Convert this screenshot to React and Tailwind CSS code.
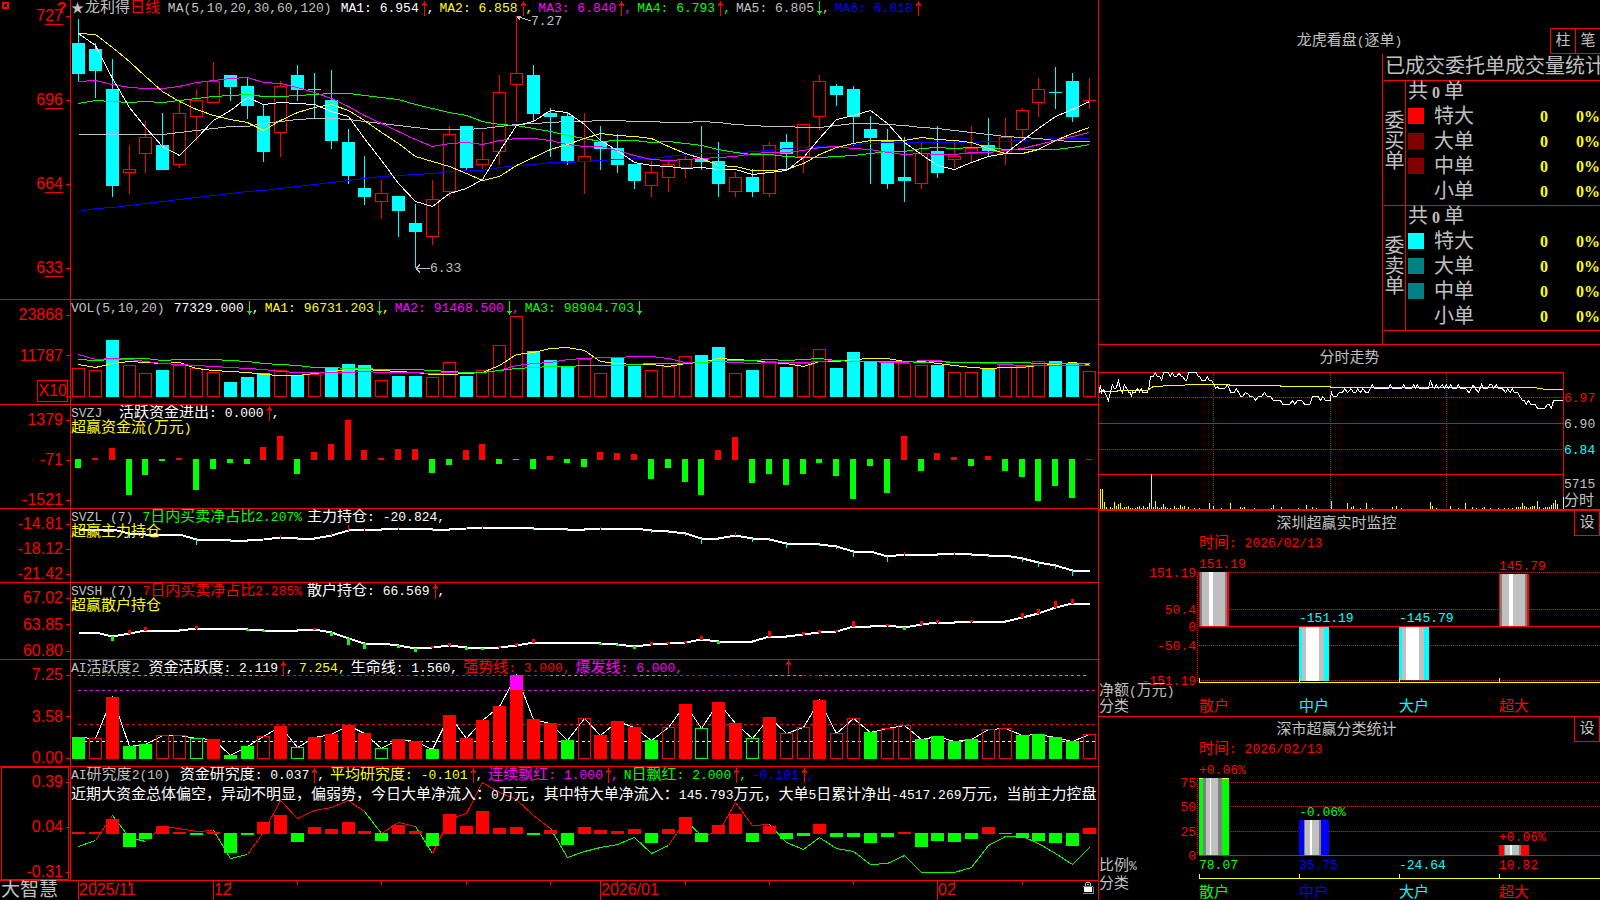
import React from 'react';

const RED = '#ff0000';
const GREEN = '#00ff00';
const CYAN = '#00ffff';
const YELLOW = '#ffff00';
const MAGENTA = '#ff00ff';
const BLUE = '#0000ff';
const SILVER = '#c0c0c0';
const WHITE = '#ffffff';

const CHART_WIDTH = 1027;

// pixel column of the n-th trading day
const dayX = (i) => Math.round(7 + i * 16.85);

// [high, body top, body bottom, low, up?]
const candles = [
	[19, 43, 74, 81, 0], [43, 49, 71, 98, 0], [59, 89, 186, 197, 0], [145, 169, 173, 194, 1], [121, 137, 154, 173, 1],
	[113, 145, 170, 170, 0], [101, 113, 165, 168, 1], [89, 100, 117, 141, 1], [62, 81, 103, 103, 1], [75, 75, 87, 101, 0],
	[78, 86, 106, 119, 0], [105, 116, 152, 162, 0], [81, 86, 133, 157, 1], [65, 75, 90, 101, 0], [73, 89, 90, 118, 0],
	[70, 100, 141, 149, 0], [129, 142, 176, 184, 0], [156, 188, 197, 205, 0], [180, 193, 202, 219, 1], [196, 196, 211, 237, 0],
	[204, 223, 232, 268, 0], [180, 199, 237, 245, 1], [126, 134, 192, 197, 1], [126, 126, 168, 170, 0], [132, 159, 165, 169, 1],
	[75, 92, 152, 165, 1], [16, 73, 85, 122, 1], [65, 75, 114, 121, 0], [108, 113, 117, 157, 0], [113, 116, 161, 165, 0],
	[113, 156, 162, 194, 1], [126, 142, 149, 170, 0], [134, 148, 165, 173, 0], [164, 164, 181, 189, 0], [161, 172, 186, 197, 1],
	[161, 164, 178, 192, 1], [156, 159, 168, 178, 1], [126, 159, 162, 170, 0], [142, 161, 184, 197, 0], [172, 177, 192, 197, 1],
	[169, 177, 192, 197, 0], [142, 145, 194, 197, 1], [134, 142, 154, 170, 0], [124, 124, 157, 173, 1], [75, 81, 117, 130, 1],
	[84, 86, 95, 106, 0], [86, 89, 117, 146, 0], [116, 129, 138, 184, 0], [129, 141, 184, 189, 0], [137, 177, 181, 202, 0],
	[142, 153, 184, 189, 1], [126, 151, 173, 178, 0], [141, 156, 160, 168, 1], [126, 148, 154, 162, 1], [118, 145, 151, 157, 0],
	[118, 137, 154, 165, 1], [108, 110, 130, 140, 1], [78, 89, 103, 117, 1], [67, 92, 93, 109, 0], [73, 81, 117, 122, 0],
	[78, 100, 101, 109, 1],
];

// moving averages, three units to a pixel
const priceLines = [
	{ color: BLUE, values: [634, 625, 622, 616, 610, 604, 598, 592, 586, 580, 574, 571, 565, 559, 553, 547, 541, 535, 529, 526, 523, 520, 514, 511, 509, 502, 496, 491, 487, 485, 484, 481, 478, 475, 473, 469, 463, 460, 458, 458, 454, 449, 445, 442, 439, 437, 433, 430, 427, 427, 427, 427, 427, 425, 424, 424, 421, 418, 415, 415, 415] },
	{ color: SILVER, values: [403, 401, 403, 403, 401, 403, 397, 391, 385, 379, 377, 369, 362, 358, 355, 355, 358, 364, 368, 374, 382, 388, 388, 388, 385, 379, 373, 370, 366, 364, 364, 361, 361, 364, 364, 367, 367, 364, 367, 371, 374, 377, 379, 380, 380, 374, 370, 370, 373, 376, 380, 385, 389, 395, 403, 409, 412, 415, 420, 424, 424] },
	{ color: GREEN, values: [310, 301, 304, 307, 304, 307, 301, 294, 289, 286, 283, 289, 289, 286, 283, 280, 280, 285, 290, 298, 313, 325, 335, 346, 364, 371, 376, 385, 394, 405, 414, 424, 421, 421, 427, 424, 430, 436, 446, 455, 463, 463, 468, 472, 472, 469, 465, 458, 454, 452, 445, 442, 444, 442, 442, 446, 448, 448, 448, 440, 433] },
	{ color: MAGENTA, values: [244, 241, 253, 262, 265, 265, 257, 247, 240, 234, 232, 246, 250, 261, 275, 293, 318, 346, 370, 394, 418, 437, 430, 427, 433, 421, 415, 415, 421, 432, 438, 439, 449, 466, 477, 481, 478, 475, 472, 467, 460, 455, 457, 451, 440, 439, 443, 448, 457, 461, 460, 463, 463, 457, 455, 450, 445, 433, 420, 409, 397] },
	{ color: YELLOW, values: [100, 103, 142, 183, 227, 272, 303, 327, 344, 356, 367, 391, 360, 337, 322, 313, 331, 360, 395, 430, 469, 484, 499, 520, 541, 527, 496, 472, 448, 433, 413, 398, 406, 409, 413, 437, 460, 473, 494, 499, 511, 511, 508, 490, 463, 442, 429, 421, 421, 421, 412, 418, 421, 427, 445, 460, 460, 446, 420, 398, 382] },
	{ color: WHITE, values: [100, 135, 235, 322, 382, 438, 466, 413, 360, 330, 292, 313, 307, 310, 313, 334, 348, 415, 480, 548, 604, 619, 580, 565, 536, 452, 376, 364, 331, 335, 372, 419, 450, 487, 494, 499, 505, 502, 506, 508, 523, 515, 510, 472, 415, 358, 344, 331, 370, 425, 463, 495, 508, 487, 469, 460, 420, 385, 349, 328, 304] },
];

const volumes = [29, 27, 57, 32, 24, 27, 32, 29, 25, 15, 20, 24, 27, 22, 23, 29, 33, 32, 17, 21, 21, 20, 35, 21, 27, 52, 81, 46, 37, 31, 38, 24, 39, 31, 27, 31, 41, 42, 50, 24, 27, 36, 30, 34, 48, 29, 45, 36, 34, 34, 32, 32, 25, 25, 28, 34, 31, 36, 36, 34, 26];
// days whose volume bar is red although the candle closed lower
const volumeUp = [0, 1, 14, 31, 49];

const volumeLines = [
	{ color: YELLOW, values: [208, 217, 203, 199, 202, 205, 202, 218, 224, 229, 232, 238, 239, 241, 235, 229, 223, 223, 226, 229, 232, 237, 238, 235, 230, 209, 176, 171, 160, 157, 166, 198, 205, 207, 208, 214, 205, 202, 190, 193, 195, 200, 205, 214, 199, 199, 193, 190, 190, 197, 199, 204, 211, 217, 220, 217, 217, 210, 207, 202, 208] },
	{ color: MAGENTA, values: [176, 193, 190, 191, 198, 205, 208, 211, 213, 217, 220, 222, 229, 232, 232, 232, 232, 229, 232, 232, 232, 233, 232, 232, 230, 224, 209, 204, 200, 193, 189, 187, 187, 184, 184, 190, 201, 202, 199, 200, 205, 200, 202, 202, 197, 196, 199, 199, 201, 202, 196, 196, 200, 202, 205, 208, 211, 211, 211, 211, 211] },
	{ color: GREEN, values: [193, 196, 192, 190, 190, 196, 193, 193, 193, 196, 197, 204, 208, 211, 216, 217, 220, 220, 223, 223, 223, 226, 229, 230, 230, 226, 220, 217, 214, 214, 211, 211, 209, 208, 205, 205, 205, 202, 198, 196, 196, 193, 196, 193, 190, 194, 198, 199, 199, 199, 202, 199, 202, 202, 202, 202, 202, 205, 205, 205, 205] },
];

const fundFlow = [-9, 2, 12, -36, -16, -2, 2, -31, -10, -4, -5, 13, 24, -15, 8, 16, 40, 10, 2, 11, 11, -14, -6, 10, 16, -5, -1, -10, 4, -4, -8, 8, 7, 6, -20, -9, -23, -36, 10, 23, -24, -15, -26, -15, -4, -17, -40, -7, -34, 24, -12, 7, 3, -7, 4, -12, -18, -42, -27, -39, 1];

const mainHolding = [20, 20, 20, 24, 25, 25, 25, 30, 30, 31, 31, 30, 28, 29, 29, 26, 21, 20, 20, 19, 19, 20, 20, 19, 18, 18, 18, 19, 19, 20, 20, 19, 19, 19, 21, 22, 24, 29, 29, 26, 29, 30, 34, 34, 35, 37, 42, 42, 47, 45, 45, 45, 44, 45, 46, 46, 49, 53, 56, 61, 61];

const retailHolding = [49, 49, 53, 50, 47, 47, 47, 45, 45, 45, 46, 47, 47, 47, 46, 49, 55, 60, 60, 62, 65, 64, 62, 64, 65, 64, 62, 59, 59, 59, 59, 60, 61, 63, 61, 60, 59, 56, 58, 58, 58, 53, 53, 51, 49, 48, 43, 43, 42, 44, 41, 39, 39, 38, 38, 38, 34, 30, 24, 20, 20];

const activity = [22, 21, 62, 13, 15, 24, 24, 21, 20, 4, 13, 23, 33, 12, 22, 25, 34, 26, 11, 20, 18, 10, 44, 21, 39, 53, 84, 40, 36, 19, 41, 24, 38, 32, 19, 32, 55, 31, 57, 36, 21, 42, 26, 32, 59, 26, 41, 27, 31, 34, 20, 23, 18, 20, 30, 31, 24, 25, 22, 18, 25];
// upper case: solid bar, lower case: outline
const activityKind = 'GrRGGrrgRGGrRgRRRRgRRGRRRRRRRGrRRRGrRgRRgRrrRrrGrrGGGGrrGGGGr';
// [from, to, color] of the dashed limit line
const activityLimit = [
	[0, 6, GREEN], [6, 8, RED], [8, 11, GREEN], [11, 20, RED], [20, 21, GREEN], [21, 28, RED], [28, 30, GREEN],
	[30, 33, RED], [33, 35, GREEN], [35, 41, RED], [41, 43, GREEN], [43, 44, RED], [44, 60, GREEN],
];

const research = [2, 2, 15, -14, -6, 8, 2, -2, 2, -20, -2, 12, 19, -9, 7, 5, 12, 3, -8, 9, 3, -13, 20, 8, 23, 6, 7, -2, 4, -12, 7, 4, 3, 5, -10, 5, 17, -9, 9, 20, -9, 8, -6, -3, 10, -4, -4, -10, -4, 2, -14, -8, -9, -6, 7, -1, -5, -8, -10, -13, 6];
const researchLine = [79, 73, 48, 70, 74, 59, 61, 64, 63, 91, 87, 65, 33, 51, 43, 40, 33, 44, 66, 55, 59, 86, 52, 46, 15, 25, 32, 48, 61, 90, 84, 80, 77, 70, 86, 78, 53, 68, 65, 35, 58, 57, 75, 82, 70, 81, 84, 97, 96, 88, 105, 105, 105, 100, 78, 69, 69, 76, 86, 97, 80];
const researchRuns = [
	[0, 1, GREEN], [1, 2, RED], [2, 4, GREEN], [4, 8, RED], [8, 10, GREEN], [10, 17, RED], [17, 18, GREEN], [18, 20, RED],
	[20, 21, GREEN], [21, 28, RED], [28, 35, GREEN], [35, 36, RED], [36, 37, GREEN], [37, 41, RED], [41, 60, GREEN],
];

const linePoints = (values, toY, from = 0) => values.map((v, i) => `${dayX(i + from) + 0.5},${toY(v) + 0.5}`).join(' ');

const splitHan = (text) => text.split(/([\u3000-\u9fff\uff00-\uffef]+)/);

/**
 * Chinese glyphs are set two sizes larger than the latin ones
 */
const Text = ({ children, className = '' }) => (
	<span className={`whitespace-pre ${className}`}>
		{splitHan(children).map((part, i) =>
			i % 2 ? <span key={i} className="text-[15px]">{part}</span> : part
		)}
	</span>
);

const Arrow = ({ down }) => (
	<svg className="w-2 h-4 shrink-0" viewBox="0 0 8 16" shapeRendering="crispEdges">
		{down ? (
			<path d="M5 0h1v14h-1zM3 10h5v1h-1v1h-1v1h-1v-1h-1v-1h-1z" fill={GREEN} />
		) : (
			<path d="M5 0h1v15h-1zM5 1h1v1h1v1h1v2h-1v-1h-3v1h-1v-2h1v-1h1z" fill={RED} />
		)}
	</svg>
);

/**
 * Indicator caption: a title and a run of coloured values
 */
const Legend = ({ title, items }) => (
	<div className="relative flex items-center gap-[5px] h-4 leading-4 whitespace-nowrap">
		<span className="mr-1 text-[#c0c0c0]">{title}</span>
		{items.map(([text, color, arrow, tail = ','], i) => (
			<span key={i} className={`flex items-center ${color}`}>
				<Text>{text}</Text>
				{arrow && <Arrow down={arrow === 'down'} />}
				{arrow && tail}
			</span>
		))}
	</div>
);

const Subtitle = ({ children }) => (
	<div className="relative leading-[14px] text-[#ffff00]"><Text>{children}</Text></div>
);

const Plot = ({ height, children }) => (
	<svg
		className="absolute inset-0 w-full h-full"
		viewBox={`0 0 ${CHART_WIDTH} ${height}`}
		preserveAspectRatio="none"
		shapeRendering="crispEdges"
	>
		{children}
	</svg>
);

const Panel = ({ labels, underline, framed, badge, children }) => (
	<section className="flex min-h-0 border-b border-[#ff0000]">
		<div
			className={`relative flex flex-col justify-between w-[71px] shrink-0 border-r border-[#ff0000] text-[#ff0000] font-['Liberation_Sans',sans-serif] text-[16px] leading-4 ${
				underline ? 'pt-2 pb-[23px]' : 'pt-[7px]'
			}`}
		>
			{framed && <div className="absolute inset-y-0 left-px right-px border border-[#ff0000]" />}
			{labels.map((label, i) => (
				<div key={i} className="flex items-center justify-end gap-[3px] h-4">
					{underline ? (
						<span>
							{label[0]}
							<span className="border-b border-[#ff0000]">{label.slice(1)}</span>
						</span>
					) : (
						<span>{label}</span>
					)}
					<span className="w-1 h-px bg-[#ff0000]" />
				</div>
			))}
			{badge && <div className="absolute right-[2px] bottom-[2px] h-[22px] pl-px border border-[#ff0000] leading-5">{badge}</div>}
		</div>
		<div className="relative flex-1 min-w-0 pt-px overflow-hidden">{children}</div>
	</section>
);

const Bar = ({ x, y, height, color, hollow, width = 13 }) =>
	hollow ? (
		<rect x={x + 0.5} y={y + 0.5} width={width - 1} height={Math.max(height - 1, 1)} fill="none" stroke={color} />
	) : (
		<rect x={x} y={y} width={width} height={height} fill={color} />
	);

const PricePlot = () => (
	<Plot height={299}>
		{candles.map(([high, top, bottom, low, up], i) => {
			const color = up ? RED : CYAN;
			return (
				<g key={i}>
					<rect x={dayX(i)} y={high} width={1} height={top - high} fill={color} />
					<rect x={dayX(i)} y={bottom} width={1} height={low - bottom} fill={color} />
					<Bar x={dayX(i) - 6} y={top} height={bottom - top} color={color} hollow={up && bottom - top > 1} />
				</g>
			);
		})}
		{priceLines.map((line) => (
			<polyline key={line.color} points={linePoints(line.values, (v) => Math.round(v / 3))} fill="none" stroke={line.color} />
		))}
	</Plot>
);

const VolumePlot = () => (
	<Plot height={104}>
		{volumes.map((v, i) => {
			const up = candles[i][4] || volumeUp.includes(i);
			return <Bar key={i} x={dayX(i) - 6} y={97 - v} height={v} color={up ? RED : CYAN} hollow={up} />;
		})}
		{volumeLines.map((line) => (
			<polyline key={line.color} points={linePoints(line.values, (v) => Math.round(v / 3) - 5)} fill="none" stroke={line.color} />
		))}
	</Plot>
);

const FlowPlot = () => (
	<Plot height={103}>
		{fundFlow.map((v, i) => (
			<Bar key={i} x={dayX(i) - 3} y={v > 0 ? 55 - v : 54} height={Math.abs(v)} width={6} color={v > 0 ? RED : GREEN} />
		))}
	</Plot>
);

const HoldingPlot = ({ height, values, tick, fall }) => (
	<Plot height={height}>
		<polyline points={linePoints(values, (v) => v)} fill="none" stroke={WHITE} strokeWidth={2} />
		{values.map((v, i) => {
			const step = i ? v - values[i - 1] : 0;
			return (
				<rect
					key={i}
					x={dayX(i) - (tick >> 1)}
					y={step > 0 ? v : v + step}
					width={tick}
					height={Math.abs(step) + (step ? 1 : 0)}
					fill={step > 0 ? fall : RED}
				/>
			);
		})}
	</Plot>
);

const ActivityPlot = () => (
	<Plot height={106}>
		{activityLimit.map(([from, to, color]) => (
			<line key={from} x1={dayX(from)} x2={dayX(to)} y1={15.5} y2={15.5} stroke={color} strokeDasharray="3 3" />
		))}
		<line x1={7} x2={1024} y1={30.5} y2={30.5} stroke={MAGENTA} strokeDasharray="3 3" />
		<line x1={7} x2={1024} y1={64.5} y2={64.5} stroke={RED} strokeDasharray="3 3" />
		<line x1={7} x2={1024} y1={81.5} y2={81.5} stroke={WHITE} strokeDasharray="3 3" />
		<polyline points={linePoints(activity, (v) => 99 - v)} fill="none" stroke={WHITE} />
		{activity.map((v, i) => {
			const kind = activityKind[i];
			return (
				<Bar
					key={i}
					x={dayX(i) - 6}
					y={99 - v}
					height={v}
					color={kind.toUpperCase() === 'G' ? GREEN : RED}
					hollow={kind === kind.toLowerCase()}
				/>
			);
		})}
		<Bar x={dayX(26) - 6} y={15} height={15} color={MAGENTA} />
		<path d="M717 0h1v14h-1zM717 1h1v1h1v1h1v2h-1v-1h-3v1h-1v-2h1v-1h1z" fill={RED} />
	</Plot>
);

const ResearchPlot = () => (
	<Plot height={113}>
		{researchRuns.map(([from, to, color]) => (
			<polyline key={from} points={linePoints(researchLine.slice(from, to + 1), (v) => v, from)} fill="none" stroke={color} />
		))}
		{research.map((v, i) => (
			<Bar key={i} x={dayX(i) - 6} y={v > 0 ? 67 - v : 66} height={Math.abs(v)} color={v > 0 ? RED : GREEN} />
		))}
	</Plot>
);

const months = [[0, '2025/11'], [8, '12'], [31, '2026/01'], [51, '02']];
const weeks = [1, 3, 9, 13, 18, 23, 28, 32, 36, 41, 46, 52, 56];
const percent = (i) => `${((dayX(i) + 1) / CHART_WIDTH) * 100}%`;

const Timeline = () => (
	<footer className="flex min-h-0">
		<div className="w-[71px] shrink-0 pl-px text-[19px] leading-5 text-[#c0c0c0] whitespace-nowrap">大智慧</div>
		<div className="relative flex-1">
			<Plot height={19}>
				{months.map(([i]) => <rect key={i} x={dayX(i)} y={0} width={1} height={19} fill={RED} />)}
				{weeks.map((i) => <rect key={i} x={dayX(i)} y={0} width={1} height={4} fill={RED} />)}
			</Plot>
			{months.map(([i, label]) => (
				<span
					key={i}
					className="absolute top-0 text-[#ff0000] text-[16px] leading-[18px] font-['Liberation_Sans',sans-serif]"
					style={{ left: percent(i) }}
				>
					{label}
				</span>
			))}
			<svg className="absolute right-1 top-px w-[11px] h-[12px]" viewBox="0 0 11 12" shapeRendering="crispEdges">
				<path d="M3 0h4v1h-4zM2 1h1v3h-1zM7 1h1v3h-1zM4 2h2v1h-2z" fill={SILVER} />
				<rect x={1} y={5} width={8} height={5} fill={WHITE} />
				<path d="M0 4h10v1h-10zM10 5h1v7h-11v-1h10z" fill="#808080" />
			</svg>
		</div>
	</footer>
);

const orderGroups = [
	{
		name: '委买单',
		rows: [['bg-[#ff0000]', '特大'], ['bg-[#800000]', '大单'], ['bg-[#800000]', '中单'], ['', '小单']],
	},
	{
		name: '委卖单',
		rows: [['bg-[#00ffff]', '特大'], ['bg-[#008080]', '大单'], ['bg-[#008080]', '中单'], ['', '小单']],
	},
];

const OrderStats = () => (
	<div className="self-end w-[218px] h-[290px] pl-px border-l border-[#ff0000] overflow-hidden text-[#c0c0c0] text-[20px]">
		<h3 className="h-[26px] pl-px leading-7 whitespace-nowrap">已成交委托单成交量统计</h3>
		<table className="w-full border-separate border-spacing-0 table-fixed">
			<colgroup>
				<col className="w-[22px]" />
				<col className="w-[27px]" />
				<col className="w-[70px]" />
				<col />
				<col className="w-[51px]" />
			</colgroup>
			{orderGroups.map((group) => (
				<tbody key={group.name}>
					<tr className="h-[25px]">
						<th rowSpan={5} scope="rowgroup" className="border-t border-r border-[#ff0000] font-normal leading-5">
							{group.name.split('').map((c, i) => <span key={i} className="block">{c}</span>)}
						</th>
						<td colSpan={4} className="pl-[2px] border-t border-[#ff0000] leading-[22px]">
							共<span className="px-1 font-['Liberation_Serif',serif] text-[16px] font-bold">0</span>单
						</td>
					</tr>
					{group.rows.map(([swatch, name]) => (
						<tr key={name} className="h-[25px]">
							<td className="pl-[2px]"><div className={`w-4 h-4 mb-[3px] ${swatch}`} /></td>
							<th scope="row" className="pl-px text-left font-normal leading-6">{name}</th>
							<td className="pb-px pr-px text-right font-['Liberation_Serif',serif] text-[16px] leading-6 font-bold text-[#ffff00]">0</td>
							<td className="pb-px text-right font-['Liberation_Serif',serif] text-[16px] leading-6 font-bold text-[#ffff00]">0%</td>
						</tr>
					))}
				</tbody>
			))}
			<tfoot>
				<tr>
					<td className="h-3 border-t border-[#ff0000]" colSpan={5} />
				</tr>
			</tfoot>
		</table>
	</div>
);

// intraday data: three units to a pixel, origin left of the frame
const intradayPrice = '12,158 16,135 20,158 26,148 30,160 36,172 40,182 46,158 52,134 58,146 64,144 70,122 76,146 82,158 88,134 95,146 100,156 106,158 109,168 113,156 120,158 128,146 133,156 140,146 144,158 157,158 162,140 166,112 170,108 176,108 181,98 186,108 194,110 200,122 206,98 220,98 226,108 232,98 238,109 246,109 252,98 258,109 264,110 271,122 275,120 281,98 304,98 309,109 314,110 320,121 331,121 337,109 343,121 350,122 356,134 362,146 367,140 373,146 390,145 397,134 402,145 408,158 418,158 424,146 431,158 438,170 444,169 450,158 458,160 465,170 475,171 482,182 490,170 500,169 509,157 515,168 527,170 535,181 556,182 564,193 584,193 592,182 600,193 607,181 620,181 629,193 645,193 652,170 670,170 676,181 684,170 692,182 706,182 709,157 715,170 725,169 733,157 742,157 750,146 757,158 768,146 776,158 782,158 788,146 796,158 803,146 813,158 820,157 832,134 838,146 880,146 886,134 892,146 920,146 926,134 932,146 950,146 956,134 961,146 967,134 973,146 1000,146 1006,122 1014,140 1018,146 1024,134 1030,146 1042,134 1048,146 1054,134 1060,146 1067,134 1073,146 1084,146 1090,134 1097,146 1112,146 1122,158 1134,134 1141,146 1151,156 1160,132 1166,146 1178,146 1184,134 1190,134 1196,146 1204,134 1210,146 1222,146 1232,158 1238,146 1246,158 1252,146 1258,158 1268,158 1276,172 1282,181 1288,182 1294,193 1300,182 1308,193 1320,194 1328,205 1350,205 1357,193 1363,194 1369,205 1376,181 1405,181';
const intradayAverage = '12,155 66,154 66,151 158,151 170,142 178,139 232,137 306,133 404,133 404,136 557,136 557,139 706,139 706,142 1312,142 1350,148 1405,148';
const intradayVolume = [
	[16, 60], [22, 60], [28, 20], [34, 5], [46, 6], [52, 3], [58, 21], [64, 10], [70, 15], [76, 18], [82, 3], [88, 6], [94, 6], [100, 9],
	[106, 3], [112, 3], [122, 3], [128, 6], [134, 9], [140, 3], [145, 9], [151, 3], [157, 6], [163, 18], [169, 105], [175, 6], [181, 24],
	[187, 6], [193, 3], [199, 6], [205, 15], [211, 6], [217, 3], [226, 3], [238, 9], [244, 3], [250, 3], [256, 12], [262, 6], [268, 9],
	[280, 5], [298, 3], [313, 3], [343, 18], [355, 9], [379, 3], [406, 18], [436, 6], [442, 3], [448, 6], [478, 3], [529, 3], [535, 12],
	[559, 5], [610, 3], [634, 12], [652, 6], [664, 3], [709, 24], [757, 18], [769, 6], [775, 9], [796, 3], [814, 18], [832, 3], [892, 6],
	[904, 9], [920, 3], [1006, 21], [1012, 9], [1024, 3], [1066, 9], [1090, 3], [1111, 18], [1132, 6], [1144, 3], [1162, 3], [1168, 6],
	[1186, 3], [1210, 3], [1228, 3], [1240, 3], [1252, 3], [1264, 6], [1270, 6], [1276, 6], [1282, 18], [1288, 10], [1294, 6], [1300, 3],
	[1306, 6], [1312, 8], [1318, 9], [1327, 24], [1333, 6], [1345, 3], [1351, 6], [1357, 5], [1363, 6], [1369, 12], [1375, 18],
	[1381, 27], [1387, 15], [1405, 36],
];

const Intraday = () => (
	<section className="flex flex-col border-b-2 border-[#ff0000] text-[#c0c0c0]">
		<h2 className="h-[27px] leading-7 text-center"><Text>分时走势</Text></h2>
		<div className="flex h-[137px]">
			<svg
				className="flex-1 min-w-0 h-full"
				viewBox="12 96 1395 411"
				preserveAspectRatio="none"
				shapeRendering="crispEdges"
				fill="none"
				strokeWidth={3}
			>
				<path d="M12 97.5H1407M12 250.5H1407M12 403.5H1407M1405.5 96V507" stroke={RED} />
				<path d="M12 172.5H1405M12 328.5H1405M355.5 99V507M706.5 99V507M1054.5 99V507" stroke={RED} strokeDasharray="3 3" />
				<polyline points={intradayAverage} stroke={YELLOW} />
				<polyline points={intradayPrice} stroke={WHITE} />
				{intradayVolume.map(([x, h]) => <path key={x} d={`M${x - 0.5} 507v-${h}`} stroke={YELLOW} />)}
			</svg>
			<div className="w-[36px] pt-[14px] overflow-hidden">
				<div className="h-[26px] leading-[26px] text-[#ff0000]">6.97</div>
				<div className="h-[26px] leading-[26px]">6.90</div>
				<div className="h-[26px] leading-[26px] text-[#00ffff]">6.84</div>
				<div className="h-[17px] mt-3 leading-[17px]">5715</div>
				<div className="h-[17px] leading-[17px]"><Text>分时</Text></div>
			</div>
		</div>
	</section>
);

// stripe edges of the cylinder bars
const tubes = {
	narrow: [[0, 1, null], [1, 3, '#808080'], [3, 10, SILVER], [10, 14, WHITE], [14, 26, SILVER], [26, 28, '#808080'], [28, 30, null]],
	wide: [[0, 3, null], [3, 7, SILVER], [7, 20, WHITE], [20, 25, SILVER], [25, 30, null]],
	tall: [[0, 4, null], [4, 7, '#808080'], [7, 11, SILVER], [11, 12, WHITE], [12, 19, SILVER], [19, 23, '#808080'], [23, 30, null]],
	small: [[0, 5, null], [5, 6, '#808080'], [6, 11, SILVER], [11, 13, WHITE], [13, 20, SILVER], [20, 22, '#808080'], [22, 30, null]],
};

const Tube = ({ x, y, height, color, kind }) =>
	tubes[kind].map(([from, to, shade]) => (
		<rect key={from} x={x + from} y={y} width={to - from} height={height} fill={shade || color} />
	));

const StatHeader = ({ title }) => (
	<div className="flex h-[25px]">
		<h2 className="flex-1 leading-7 text-center text-[#c0c0c0]"><Text>{title}</Text></h2>
		<button type="button" className="w-[26px] h-[25px] pt-px border-x border-b border-[#ff0000] text-[#c0c0c0] leading-6">
			<Text>设</Text>
		</button>
	</div>
);

const StatDate = () => (
	<div className="h-[15px] pl-[100px] leading-4 text-[#ff0000]"><Text>时间: 2026/02/13</Text></div>
);

const Label = ({ x, y, color, end, children }) => (
	<text x={x} y={y - 1} fill={color} textAnchor={end ? 'end' : 'start'} className="text-[13px]">
		{splitHan(children).map((part, i) =>
			i % 2 ? <tspan key={i} className="text-[15px]">{part}</tspan> : part
		)}
	</text>
);

const YellowAxis = ({ y }) => (
	<path d={`M100 ${y}.5H501M100.5 ${y}v-4M200.5 ${y}v-4M300.5 ${y}v-4M400.5 ${y}v-4`} stroke={YELLOW} />
);

const Monitor = () => (
	<section className="border-b border-[#ff0000] overflow-hidden">
		<StatHeader title="深圳超赢实时监控" />
		<StatDate />
		<svg className="w-full h-[165px]" viewBox="0 40 501 165" preserveAspectRatio="xMinYMin slice">
			<g shapeRendering="crispEdges" fill="none">
				<path d="M100 61.5H501M100 98.5H501M100 134.5H501M100 169.5H501M98.5 61V170" stroke={RED} strokeDasharray="1 1" />
				<path d="M100 115.5H501" stroke={RED} />
				<Tube x={100} y={61} height={54} color={RED} kind="narrow" />
				<Tube x={200} y={116} height={54} color={CYAN} kind="wide" />
				<Tube x={300} y={116} height={53} color={CYAN} kind="wide" />
				<Tube x={400} y={63} height={52} color={RED} kind="narrow" />
				<YellowAxis y={171} />
			</g>
			<Label x={97} y={67} color={RED} end>151.19</Label>
			<Label x={97} y={104} color={RED} end>50.4</Label>
			<Label x={97} y={121} color={RED} end>0</Label>
			<Label x={97} y={140} color={RED} end>-50.4</Label>
			<Label x={97} y={175} color={RED} end>-151.19</Label>
			<Label x={100} y={58} color={RED}>151.19</Label>
			<Label x={200} y={112} color={CYAN}>-151.19</Label>
			<Label x={300} y={112} color={CYAN}>-145.79</Label>
			<Label x={400} y={60} color={RED}>145.79</Label>
			<Label x={0} y={185} color={SILVER}>净额(万元)</Label>
			<Label x={0} y={201} color={SILVER}>分类</Label>
			<Label x={100} y={201} color={RED}>散户</Label>
			<Label x={200} y={201} color={CYAN}>中户</Label>
			<Label x={300} y={201} color={CYAN}>大户</Label>
			<Label x={400} y={201} color={RED}>超大</Label>
		</svg>
	</section>
);

const Categories = () => (
	<section className="overflow-hidden">
		<StatHeader title="深市超赢分类统计" />
		<StatDate />
		<svg className="w-full h-[143px]" viewBox="0 40 501 143" preserveAspectRatio="xMinYMin slice">
			<g shapeRendering="crispEdges" fill="none">
				<path d="M100 65.5H501M100 89.5H501M100 114.5H501M98.5 61V138" stroke={RED} strokeDasharray="1 1" />
				<Tube x={100} y={61} height={77} color={GREEN} kind="tall" />
				<path d="M100 61.5H104M123 61.5H130" stroke={YELLOW} />
				<Tube x={200} y={103} height={35} color={BLUE} kind="small" />
				<Tube x={400} y={128} height={10} color={RED} kind="small" />
				<path d="M100 138.5H501" stroke={RED} />
				<YellowAxis y={161} />
			</g>
			<Label x={97} y={71} color={RED} end>75</Label>
			<Label x={97} y={95} color={RED} end>50</Label>
			<Label x={97} y={120} color={RED} end>25</Label>
			<Label x={97} y={144} color={RED} end>0</Label>
			<Label x={100} y={58} color={RED}>+0.06%</Label>
			<Label x={200} y={100} color={GREEN}>-0.06%</Label>
			<Label x={400} y={125} color={RED}>+0.06%</Label>
			<Label x={100} y={153} color={GREEN}>78.07</Label>
			<Label x={200} y={153} color={BLUE}>35.75</Label>
			<Label x={300} y={153} color={CYAN}>-24.64</Label>
			<Label x={400} y={153} color={RED}>10.82</Label>
			<Label x={0} y={154} color={SILVER}>比例%</Label>
			<Label x={0} y={172} color={SILVER}>分类</Label>
			<Label x={100} y={181} color={GREEN}>散户</Label>
			<Label x={200} y={181} color={BLUE}>中户</Label>
			<Label x={300} y={181} color={CYAN}>大户</Label>
			<Label x={400} y={181} color={RED}>超大</Label>
		</svg>
	</section>
);

const App = () => (
	<div className="flex h-screen overflow-hidden bg-black text-white text-[13px] font-['Liberation_Mono','Noto_Sans_CJK_SC',monospace]">
		<main className="relative grid flex-1 min-w-0 grid-rows-[300fr_105fr_104fr_74fr_77fr_107fr_114fr_19fr] border-r border-[#ff0000]">
			<div className="absolute left-[2px] top-[2px] w-[7px] h-[7px] border-2 border-[#ff0000]" />
			<span className="absolute left-[57px] top-0 text-[16px] leading-[18px] font-bold text-[#ff0000]">?</span>

			{/* Price */}
			<Panel labels={['727', '696', '664', '633']} underline>
				<PricePlot />
				<Legend
					title={
						<>
							<span className="inline-block w-[14px]">★</span>
							<Text>龙利得</Text>
							<Text className="text-[#ff0000]">日线</Text> MA(5,10,20,30,60,120)
						</>
					}
					items={[
						['MA1: 6.954', 'text-white', 'up'],
						['MA2: 6.858', 'text-[#ffff00]', 'up'],
						['MA3: 6.840', 'text-[#ff00ff]', 'up'],
						['MA4: 6.793', 'text-[#00ff00]', 'up'],
						['MA5: 6.805', 'text-[#c0c0c0]', 'down'],
						['MA6: 6.818', 'text-[#0000ff]', 'up', ''],
					]}
				/>
				<div className="absolute top-[14px] flex leading-4 text-[#c0c0c0]" style={{ left: percent(26) }}>
					<svg className="w-[14px] h-4" viewBox="0 0 14 16" fill="none" stroke={SILVER} shapeRendering="crispEdges">
						<path d="M0 2.5L14 7M0 2.5h4M0 2.5l3 3" />
					</svg>
					7.27
				</div>
				<div className="absolute top-[261px] flex leading-4 text-[#c0c0c0]" style={{ left: percent(20) }}>
					<svg className="w-[14px] h-4" viewBox="0 0 14 16" fill="none" stroke={SILVER} shapeRendering="crispEdges">
						<path d="M0 7.5H14M0 7.5l4 -4M0 7.5l4 4" />
					</svg>
					6.33
				</div>
			</Panel>

			{/* Volume */}
			<Panel labels={['23868', '11787', '']} badge="X10">
				<VolumePlot />
				<Legend
					title="VOL(5,10,20)"
					items={[
						['77329.000', 'text-white', 'down'],
						['MA1: 96731.203', 'text-[#ffff00]', 'down'],
						['MA2: 91468.500', 'text-[#ff00ff]', 'down'],
						['MA3: 98904.703', 'text-[#00ff00]', 'down', ''],
					]}
				/>
			</Panel>

			{/* Fund flow */}
			<Panel labels={['1379', '-71', '-1521']}>
				<FlowPlot />
				<Legend title={<Text>{'SVZJ '}</Text>} items={[['活跃资金进出: 0.000', 'text-white', 'up']]} />
				<Subtitle>超赢资金流(万元)</Subtitle>
			</Panel>

			{/* Main force holding */}
			<Panel labels={['-14.81', '-18.12', '-21.42']}>
				<HoldingPlot height={73} values={mainHolding} tick={1} fall={CYAN} />
				<Legend title="SVZL (7)" items={[['7日内买卖净占比2.207%', 'text-[#00ff00]'], ['主力持仓: -20.824,', 'text-white']]} />
				<Subtitle>超赢主力持仓</Subtitle>
			</Panel>

			{/* Retail holding */}
			<Panel labels={['67.02', '63.85', '60.80']}>
				<HoldingPlot height={76} values={retailHolding} tick={3} fall={GREEN} />
				<Legend title="SVSH (7)" items={[['7日内买卖净占比2.285%', 'text-[#ff0000]'], ['散户持仓: 66.569', 'text-white', 'up']]} />
				<Subtitle>超赢散户持仓</Subtitle>
			</Panel>

			{/* Activity */}
			<Panel labels={['7.25', '3.58', '0.00']}>
				<ActivityPlot />
				<Legend
					title={<Text>AI活跃度2</Text>}
					items={[
						['资金活跃度: 2.119', 'text-white', 'up'],
						['7.254,', 'text-[#ffff00]'],
						['生命线: 1.560,', 'text-white'],
						['强势线: 3.000,', 'text-[#ff0000]'],
						['爆发线: 6.000,', 'text-[#ff00ff]'],
					]}
				/>
			</Panel>

			{/* Research */}
			<Panel labels={['0.39', '0.04', '-0.31']} framed>
				<ResearchPlot />
				<Legend
					title={<Text>AI研究度2(10)</Text>}
					items={[
						['资金研究度: 0.037', 'text-white', 'up'],
						['平均研究度: -0.101', 'text-[#ffff00]', 'up'],
						['连续飘红: 1.000', 'text-[#ff00ff]', 'up'],
						['N日飘红: 2.000', 'text-[#00ff00]', 'up'],
						['-0.101', 'text-[#0000ff]', 'up'],
					]}
				/>
				<p className="relative mt-1 leading-4 whitespace-nowrap">
					<Text>近期大资金总体偏空，异动不明显，偏弱势，今日大单净流入：0万元，其中特大单净流入：145.793万元，大单5日累计净出-4517.269万元，当前主力控盘</Text>
				</p>
			</Panel>

			<Timeline />
		</main>

		<aside className="grid w-[501px] shrink-0 grid-rows-[345fr_166fr_206fr_183fr]">
			<section className="flex flex-col border-b border-[#ff0000]">
				<div className="flex h-[54px] pt-7">
					<h2 className="flex-1 pl-[50px] leading-7 text-center text-[#c0c0c0]"><Text>龙虎看盘(逐单)</Text></h2>
					<div className="flex w-[50px] h-[26px] border-y border-[#ff0000] text-[#c0c0c0] leading-6">
						<button type="button" className="flex-1 pt-px border-l border-[#ff0000]"><Text>柱</Text></button>
						<button type="button" className="flex-1 pt-px border-l border-[#ff0000]"><Text>笔</Text></button>
					</div>
				</div>
				<OrderStats />
			</section>
			<Intraday />
			<Monitor />
			<Categories />
		</aside>
	</div>
);

export default App;
